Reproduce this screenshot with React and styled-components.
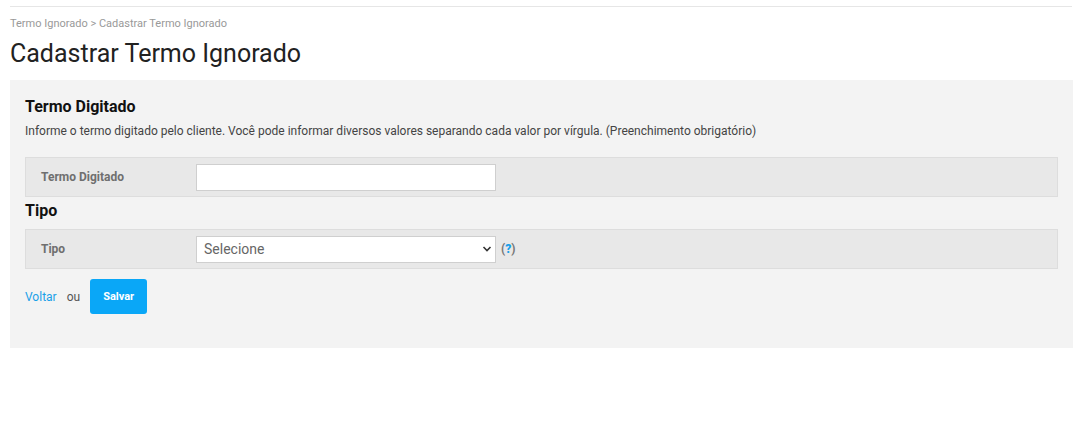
import React from "react";
import styled, { createGlobalStyle } from "styled-components";

const Global = createGlobalStyle`
  html, body { margin: 0; padding: 0; background: #fff; }
  body { font-family: Roboto, "Liberation Sans", Arial, sans-serif; color: #333; }
  * { box-sizing: border-box; }
`;

const Page = styled.div`
  margin: 0 10px;
  padding-top: 6px;
`;

const TopRule = styled.div`
  height: 1px;
  background: #e6e6e6;
  margin-right: 1px;
`;

const Breadcrumb = styled.div`
  margin-top: 10px;
  font-size: 11px;
  line-height: 14px;
  color: #999;
`;

const Title = styled.h1`
  margin: 8px 0 0;
  font-size: 25px;
  font-weight: 400;
  line-height: 30px;
  color: #222;
`;

const Panel = styled.div`
  margin-top: 11px;
  background: #f3f3f3;
  padding: 16px 15px 34px 15px;
`;

const SectionTitle = styled.h2`
  margin: 0;
  font-size: 16px;
  font-weight: 700;
  line-height: 22px;
  color: #111;
`;

const Help = styled.p`
  margin: 5px 0 0;
  font-size: 12px;
  line-height: 16px;
  color: #444;
`;

const FieldRow = styled.div`
  display: grid;
  grid-template-columns: 155px 1fr;
  align-items: center;
  height: 40px;
  margin-top: ${(p) => p.$top}px;
  padding-left: 15px;
  background: #e8e8e8;
  border: 1px solid #dddddd;
`;

const Label = styled.label`
  font-size: 12px;
  font-weight: 700;
  color: #6f6f6f;
`;

const Control = styled.div`
  display: flex;
  align-items: center;
  gap: 5px;
`;

const TextInput = styled.input`
  width: 300px;
  height: 27px;
  border: 1px solid #cfcfcf;
  background: #fff;
  border-radius: 0;
  outline: none;
  padding: 0 7px;
  font: inherit;
`;

const SelectBox = styled.div`
  position: relative;
  width: 300px;
  height: 27px;
`;

const Select = styled.select`
  appearance: none;
  width: 100%;
  height: 100%;
  border: 1px solid #cfcfcf;
  background: #fff;
  border-radius: 0;
  padding: 0 7px;
  font-family: Roboto, "Liberation Sans", Arial, sans-serif;
  font-size: 14px;
  color: #666;
  outline: none;
`;

const Chevron = styled.svg`
  position: absolute;
  right: 4px;
  top: 9px;
  pointer-events: none;
`;

const HelpMark = styled.span`
  font-size: 12px;
  font-weight: 700;
  color: #777;
  & b { color: #1aa0e8; }
`;

const SubTitle = styled(SectionTitle)`
  margin-top: 2px;
  line-height: 24px;
`;

const Actions = styled.div`
  display: flex;
  align-items: center;
  margin-top: 10px;
  font-size: 12px;
`;

const BackLink = styled.a`
  color: #1aa0e8;
  text-decoration: none;
`;

const Or = styled.span`
  color: #555;
  margin: 0 10px;
`;

const SaveButton = styled.button`
  width: 57px;
  height: 35px;
  border: 0;
  border-radius: 3px;
  background: #0aa7f7;
  color: #fff;
  font-family: Roboto, "Liberation Sans", Arial, sans-serif;
  font-size: 11px;
  font-weight: 700;
`;

export default function App() {
  return (
    <>
      <Global />
      <Page>
        <TopRule />
        <Breadcrumb>Termo Ignorado &gt; Cadastrar Termo Ignorado</Breadcrumb>
        <Title>Cadastrar Termo Ignorado</Title>
        <Panel>
          <SectionTitle>Termo Digitado</SectionTitle>
          <Help>
            Informe o termo digitado pelo cliente. Você pode informar diversos valores separando cada valor por vírgula. (Preenchimento obrigatório)
          </Help>
          <FieldRow $top={18}>
            <Label>Termo Digitado</Label>
            <Control>
              <TextInput type="text" />
            </Control>
          </FieldRow>
          <SubTitle>Tipo</SubTitle>
          <FieldRow $top={6}>
            <Label>Tipo</Label>
            <Control>
              <SelectBox>
                <Select defaultValue="">
                  <option value="">Selecione</option>
                </Select>
                <Chevron width="10" height="8" viewBox="0 0 10 8">
                  <path d="M1.5 2 L5 5.5 L8.5 2" fill="none" stroke="#333" strokeWidth="1.6" />
                </Chevron>
              </SelectBox>
              <HelpMark>(<b>?</b>)</HelpMark>
            </Control>
          </FieldRow>
          <Actions>
            <BackLink href="#">Voltar</BackLink>
            <Or>ou</Or>
            <SaveButton>Salvar</SaveButton>
          </Actions>
        </Panel>
      </Page>
    </>
  );
}
